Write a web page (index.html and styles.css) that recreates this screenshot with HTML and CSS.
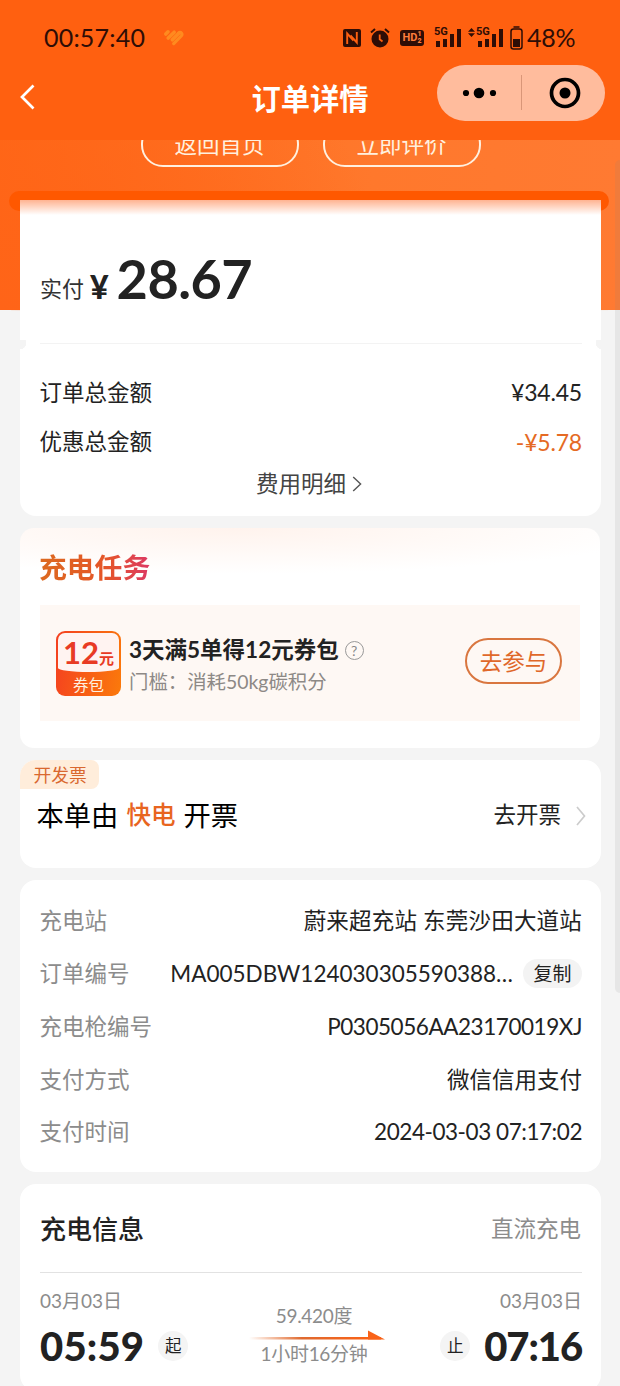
FILE: index.html
```html
<!DOCTYPE html>
<html lang="zh-CN">
<head>
<meta charset="utf-8">
<title>订单详情</title>
<link rel="stylesheet" href="styles.css">
</head>
<body>
<div class="screen">
  <header class="header">
    <div class="status">
      <span class="clock">00:57:40</span>
      <svg class="heart" width="22" height="18" viewBox="0 0 22 18" fill="none" stroke="#ff8a1f" stroke-width="3.600" stroke-linecap="round"><path d="M2.800 5 5 2.800M5.200 9 11.200 3.200M9.300 10.800 15.600 4.400"/><path d="M15.400 4.200C17.800 2 20 5 18.200 7L10.700 14.600" stroke-width="3.200"/></svg>
      <div class="status-icons">
        <svg width="18" height="18" viewBox="0 0 18 18"><rect width="18" height="18" rx="2" fill="#2e0d06"/><path d="M4.200 15V4.500L10.500 11.500M7.500 6.500L13.800 13.500V3" fill="none" stroke="#ff6010" stroke-width="1.900"/></svg>
        <svg class="alarm" width="20" height="20" viewBox="0 0 20 20"><circle cx="10" cy="11" r="8.500" fill="#2e0d06"/><path d="M1 4.500 5 1M19 4.500 15 1" stroke="#2e0d06" stroke-width="2"/><path d="M9.700 6.500V11.300L12.500 13.500" stroke="#ff6010" stroke-width="1.800" fill="none"/></svg>
        <span class="hd">HD<i><b>1</b><b>2</b></i></span>
        <span class="signal"><em>5G</em><svg width="27" height="19" viewBox="0 0 27 19" fill="#2e0d06"><path d="M0 13h4v6H0zM7 11h4v8H7zM14 6h4v13h-4zM21 1h4v18h-4z"/></svg></span>
        <span class="signal second"><svg class="updown" width="7" height="9" viewBox="0 0 7 9" fill="#2e0d06"><path d="M0 3.800 3.500 0 7 3.800zM0 5.200 3.500 9 7 5.200z"/></svg><em>5G</em><svg width="27" height="19" viewBox="0 0 27 19" fill="#2e0d06"><path d="M0 13h4v6H0zM7 11h4v8H7zM14 6h4v13h-4zM21 1h4v18h-4z"/></svg></span>
        <svg class="battery" width="13" height="24" viewBox="0 0 13 24"><path d="M3.500 1h6" stroke="#2e0d06" stroke-width="1.500"/><rect x="1" y="3" width="11" height="20" rx="2.500" fill="none" stroke="#2e0d06" stroke-width="1.500"/><path d="M3 13h7v8H3z" fill="#2e0d06"/></svg>
        <span class="percent">48%</span>
      </div>
    </div>
    <nav class="nav">
      <svg class="back" width="16" height="26" viewBox="0 0 16 26" fill="none" stroke="#fff" stroke-width="2.700"><path d="M13.500 1.500 2 13 13.500 24.500"/></svg>
      <h1 class="title">订单详情</h1>
      <div class="capsule">
        <svg width="36" height="12" viewBox="0 0 36 12"><circle cx="5" cy="6" r="3.100"/><circle cx="18" cy="6" r="5.300"/><circle cx="32" cy="6" r="3.100"/></svg>
        <svg class="target" width="32" height="32" viewBox="0 0 32 32"><circle cx="16" cy="16" r="13.500" fill="none" stroke="#000" stroke-width="3.700"/><circle cx="16" cy="16" r="5.500"/></svg>
      </div>
    </nav>
  </header>

  <main class="content">
    <div class="hero"></div>
    <div class="actions">
      <span class="ghost">返回首页</span>
      <span class="ghost">立即评价</span>
    </div>
    <div class="slot"></div>

    <section class="card bill">
      <div class="paid"><span class="paid-label">实付</span><span class="yen">¥</span><span class="amount">28.67</span></div>
      <div class="tear"></div>
      <div class="row sum"><span>订单总金额</span><span class="money">¥34.45</span></div>
      <div class="row sum"><span>优惠总金额</span><span class="money off">-¥5.78</span></div>
      <div class="detail">费用明细<svg width="10" height="16" viewBox="0 0 10 16" fill="none" stroke="#555" stroke-width="1.400"><path d="M1.200 1 8.600 8 1.200 15"/></svg></div>
    </section>

    <section class="card task">
      <h2 class="task-title">充电任务</h2>
      <div class="promo">
        <div class="coupon"><div class="coupon-top">12<small>元</small></div><div class="coupon-bottom">券包</div></div>
        <div class="promo-text">
          <div class="promo-title">3天满5单得12元券包<span class="help">?</span></div>
          <div class="promo-sub">门槛：消耗50kg碳积分</div>
        </div>
        <span class="join">去参与</span>
      </div>
    </section>

    <section class="card invoice">
      <span class="tag">开发票</span>
      <div class="invoice-row">
        <div class="issuer"><span>本单由</span><strong>快电</strong><span>开票</span></div>
        <div class="go">去开票<svg width="10" height="20" viewBox="0 0 10 20" fill="none" stroke="#ccc" stroke-width="1.700"><path d="M1 1 8.500 10 1 19"/></svg></div>
      </div>
    </section>

    <section class="card info">
      <div class="row"><span class="key">充电站</span><span class="station">蔚来超充站 东莞沙田大道站</span></div>
      <div class="row"><span class="key">订单编号</span><span class="order"><span class="order-no">MA005DBW124030305590388…</span><span class="copy">复制</span></span></div>
      <div class="row"><span class="key">充电枪编号</span><span class="gun">P0305056AA23170019XJ</span></div>
      <div class="row"><span class="key">支付方式</span><span>微信信用支付</span></div>
      <div class="row"><span class="key">支付时间</span><span class="paytime">2024-03-03 07:17:02</span></div>
    </section>

    <section class="card charge">
      <div class="charge-head"><h2>充电信息</h2><span>直流充电</span></div>
      <div class="trip">
        <div class="end">
          <span class="date">03月03日</span>
          <div class="moment"><span class="time">05:59</span><span class="dot">起</span></div>
        </div>
        <div class="middle">
          <span class="energy">59.420度</span>
          <svg width="136" height="10" viewBox="0 0 136 10"><defs><linearGradient id="fade" x1="0" x2="1" y1="0" y2="0"><stop offset="0" stop-color="#ea7030" stop-opacity="0"/><stop offset=".4" stop-color="#df6a30"/><stop offset="1" stop-color="#ff6010"/></linearGradient></defs><rect y="7" width="132" height="2.500" fill="url(#fade)"/><path d="M119 .5 136 9.500H119z" fill="#f96218"/></svg>
          <span class="duration">1小时16分钟</span>
        </div>
        <div class="end right">
          <span class="date">03月03日</span>
          <div class="moment"><span class="dot">止</span><span class="time finish">07:16</span></div>
        </div>
      </div>
    </section>
  </main>
  <div class="scrollbar"></div>
</div>
</body>
</html>
```
FILE: styles.css
```css
* { box-sizing: border-box; }
body {
  margin: 0;
  background: #f4f4f4;
  color: #222;
  font: 22.5px/1 Lato, "Noto Sans CJK SC", sans-serif;
}
h1, h2 { margin: 0; }
svg { display: block; flex: none; }
span { white-space: nowrap; }
.screen { position: relative; width: 620px; height: 1386px; overflow: hidden; }

/* header */
.header { height: 140px; background: #ff6010; }
.status { display: flex; align-items: center; height: 62px; padding: 13px 44px 0; color: #2e0d06; }
.clock { width: 119px; font-size: 25px; letter-spacing: .2px; }
.status-icons { display: flex; align-items: center; margin-left: auto; }
.alarm { margin-left: 9px; }
.hd { display: flex; align-items: center; justify-content: center; width: 24px; height: 16px; margin-left: 10px; border-radius: 3px; background: #2e0d06; color: #ff7d3c; font: bold 11px/1 Roboto, sans-serif; }
.hd i { display: flex; flex-direction: column; font: bold 7px/7px Roboto, sans-serif; }
.signal { position: relative; display: block; margin-left: 12px; }
.signal em { position: absolute; left: -2px; top: -1px; padding-right: 1px; background: #ff6010; font: bold 11px/10px Roboto, sans-serif; }
.signal.second { margin-left: 15px; }
.updown { position: absolute; left: -10px; top: 0; }
.battery { margin-left: 5px; }
.percent { margin-left: 4px; width: 49px; font-size: 25px; letter-spacing: -.3px; }
.nav { display: grid; grid-template-columns: 1fr auto 1fr; align-items: center; height: 72px; padding: 0 15px 0 20px; }
.title { margin: 1px 5px 0 0; color: #fff; font-size: 29.300px; font-weight: 700; }
.back { margin-top: -2px; }
.capsule { display: flex; align-items: center; justify-self: end; width: 168px; height: 56px; margin-top: -10px; padding-left: 24px; border-radius: 28px; background: #ffbc9d linear-gradient(#d99678, #d99678) 84px 10px / 1px 35px no-repeat; }
.target { margin-left: 52px; }

/* scrolling content */
.content { position: relative; height: 1246px; overflow: hidden; }
.hero { position: absolute; z-index: -1; inset: 0 0 auto; height: 171px; background: radial-gradient(circle at 0 100%, #ff6418, transparent 60%), linear-gradient(90deg, #ff6816, #ff782c 60%, #ff7a32); clip-path: polygon(0 0, 100% 0, 100% 170px, 50% 100%, 0 170px); }
.actions { display: flex; justify-content: center; gap: 24px; height: 51px; margin: -18px 0 18px 1px; }
.ghost { width: 158px; height: 45px; border: 2px solid #fff0df; border-radius: 22px; color: #fff0df; font-size: 22.500px; line-height: 42px; text-align: center; }
.slot { height: 20px; margin: 0 11px -11px 9px; border-radius: 10px; background: #ff5800; }
.card { margin: 0 19px 12px 20px; padding: 0 19px 0 20px; border-radius: 16px; background: #fff; }
.row { display: flex; align-items: center; justify-content: space-between; }

.bill { height: 316px; border-radius: 0 0 16px 16px; background: linear-gradient(#ffb391, #fff 15px); }
.paid { display: flex; align-items: baseline; height: 140px; padding-top: 52px; }
.paid-label { color: #333; font-size: 22px; transform: translateY(-2px); }
.yen { margin-left: 6px; font-size: 32px; font-weight: 900; }
.amount { margin-left: 8px; font-size: 54px; font-weight: 700; letter-spacing: -.5px; }
.tear { height: 28px; margin: 0 -20px; background: radial-gradient(circle at 0 3px, #f4f4f4 6px, transparent 6.500px), radial-gradient(circle at 100% 3px, #f4f4f4 6px, transparent 6.500px), linear-gradient(#f3f3f3, #f3f3f3) 20px 3px / 542px 1px no-repeat; }
.sum { height: 49.500px; }
.sum > :first-child, .key { margin-left: -.5px; }
.detail { display: flex; align-items: center; justify-content: center; gap: 6px; height: 34px; margin-right: 4px; color: #444; }
.off { color: #e56a24; }
.money { font-size: 23px; letter-spacing: -.2px; }

.task { height: 220px; margin-right: 20px; padding-top: 25px; background: radial-gradient(ellipse 430px 46px at 37% 0, #fff3ed, #fff); border-radius: 14px; }
.task-title { width: 112px; height: 52px; margin-left: -1px; background: linear-gradient(90deg, #dc6a20, #e55528 60%, #dc3866); -webkit-background-clip: text; background-clip: text; color: transparent; font-size: 27.800px; line-height: 30px; }
.promo { display: flex; align-items: center; height: 116px; margin-right: 1px; padding: 0 18px 0 16px; background: #fef8f4; }
.coupon { width: 65px; height: 65px; padding: 2px; border-radius: 9px; background: linear-gradient(100deg, #f43f20, #fb7a0b); overflow: hidden; }
.coupon-top { height: 39px; border-radius: 7px 7px 50% 50% / 7px 7px 4px 4px; background: #fff3f1; color: #e83a24; font-size: 31px; font-weight: 700; line-height: 38px; text-align: center; white-space: nowrap; }
.coupon-top small { font-size: 15px; }
.coupon-bottom { color: #fff0df; font-size: 15.500px; line-height: 26px; text-align: center; }
.promo-text { margin: 7px 0 0 8px; }
.promo-title { display: flex; align-items: center; font-size: 22.500px; font-weight: 700; line-height: 30px; }
.promo-sub { color: #8d8986; font-size: 19.400px; line-height: 33px; }
.help { width: 19px; height: 19px; margin-left: 6px; border: 1px solid #999; border-radius: 50%; color: #888; font-size: 14px; font-weight: 400; line-height: 17px; text-align: center; }
.join { width: 97px; height: 46px; margin: -5px 0 0 auto; border: 2px solid #d9763f; border-radius: 23px; color: #e0682a; line-height: 43px; text-align: center; }

.invoice { height: 108px; padding: 0 15px 0 16.500px; overflow: hidden; }
.tag { display: block; width: 79px; height: 29px; margin-left: -17px; padding-left: 14px; border-radius: 0 8px 8px 0; background: #ffeddb; color: #d9682f; font-size: 17.800px; line-height: 30px; }
.invoice-row { display: flex; align-items: center; justify-content: space-between; height: 53px; }
.issuer { display: flex; align-items: center; gap: 8px; color: #000; font-size: 27.300px; }
.issuer strong { color: #e8651f; font-size: 24.500px; font-weight: 500; }
.go { display: flex; align-items: center; gap: 15px; }

.info { height: 292px; padding-top: 15px; }
.info .row { height: 52.800px; }
.key { color: #8c8c8c; }
.station { letter-spacing: .2px; }
.gun { letter-spacing: -.45px; }
.paytime { letter-spacing: -.45px; }
.order { display: flex; align-items: center; }
.copy { width: 59px; height: 29px; margin: -2px 0 0 10px; border-radius: 15px; background: #f3f3f3; font-size: 19px; line-height: 29px; text-align: center; }

.charge { height: 207px; margin-bottom: 0; }
.charge-head { display: flex; align-items: center; justify-content: space-between; height: 89px; padding-top: 2px; border-bottom: 1.500px solid #e2e2e2; }
.charge-head h2 { font-size: 26px; font-weight: 500; }
.charge-head span { margin-right: 1px; color: #8c8c8c; }
.trip { display: grid; grid-template-columns: 1fr 136px 1fr; }
.end { display: flex; flex-direction: column; padding-top: 14px; }
.right { align-items: flex-end; }
.date { color: #8c8c8c; font-size: 19px; line-height: 28px; }
.moment { display: flex; align-items: center; gap: 14px; height: 62px; }
.time { font-size: 40px; font-weight: 900; letter-spacing: .2px; }
.finish { letter-spacing: -1.100px; }
.dot { width: 30px; height: 30px; border-radius: 50%; background: #f4f4f4; font-size: 16.500px; line-height: 30px; text-align: center; }
.middle { display: flex; flex-direction: column; align-items: center; margin: 0 -6px 0 6px; padding-top: 29px; color: #8c8c8c; font-size: 19px; letter-spacing: -.3px; }
.energy { margin-right: 6px; line-height: 28px; }
.duration { margin-right: 6px; line-height: 28px; }

.scrollbar { position: absolute; right: 0; top: 160px; width: 5px; height: 833px; border-radius: 5px 0 0 5px; background: rgba(128, 128, 128, .12); }
```
